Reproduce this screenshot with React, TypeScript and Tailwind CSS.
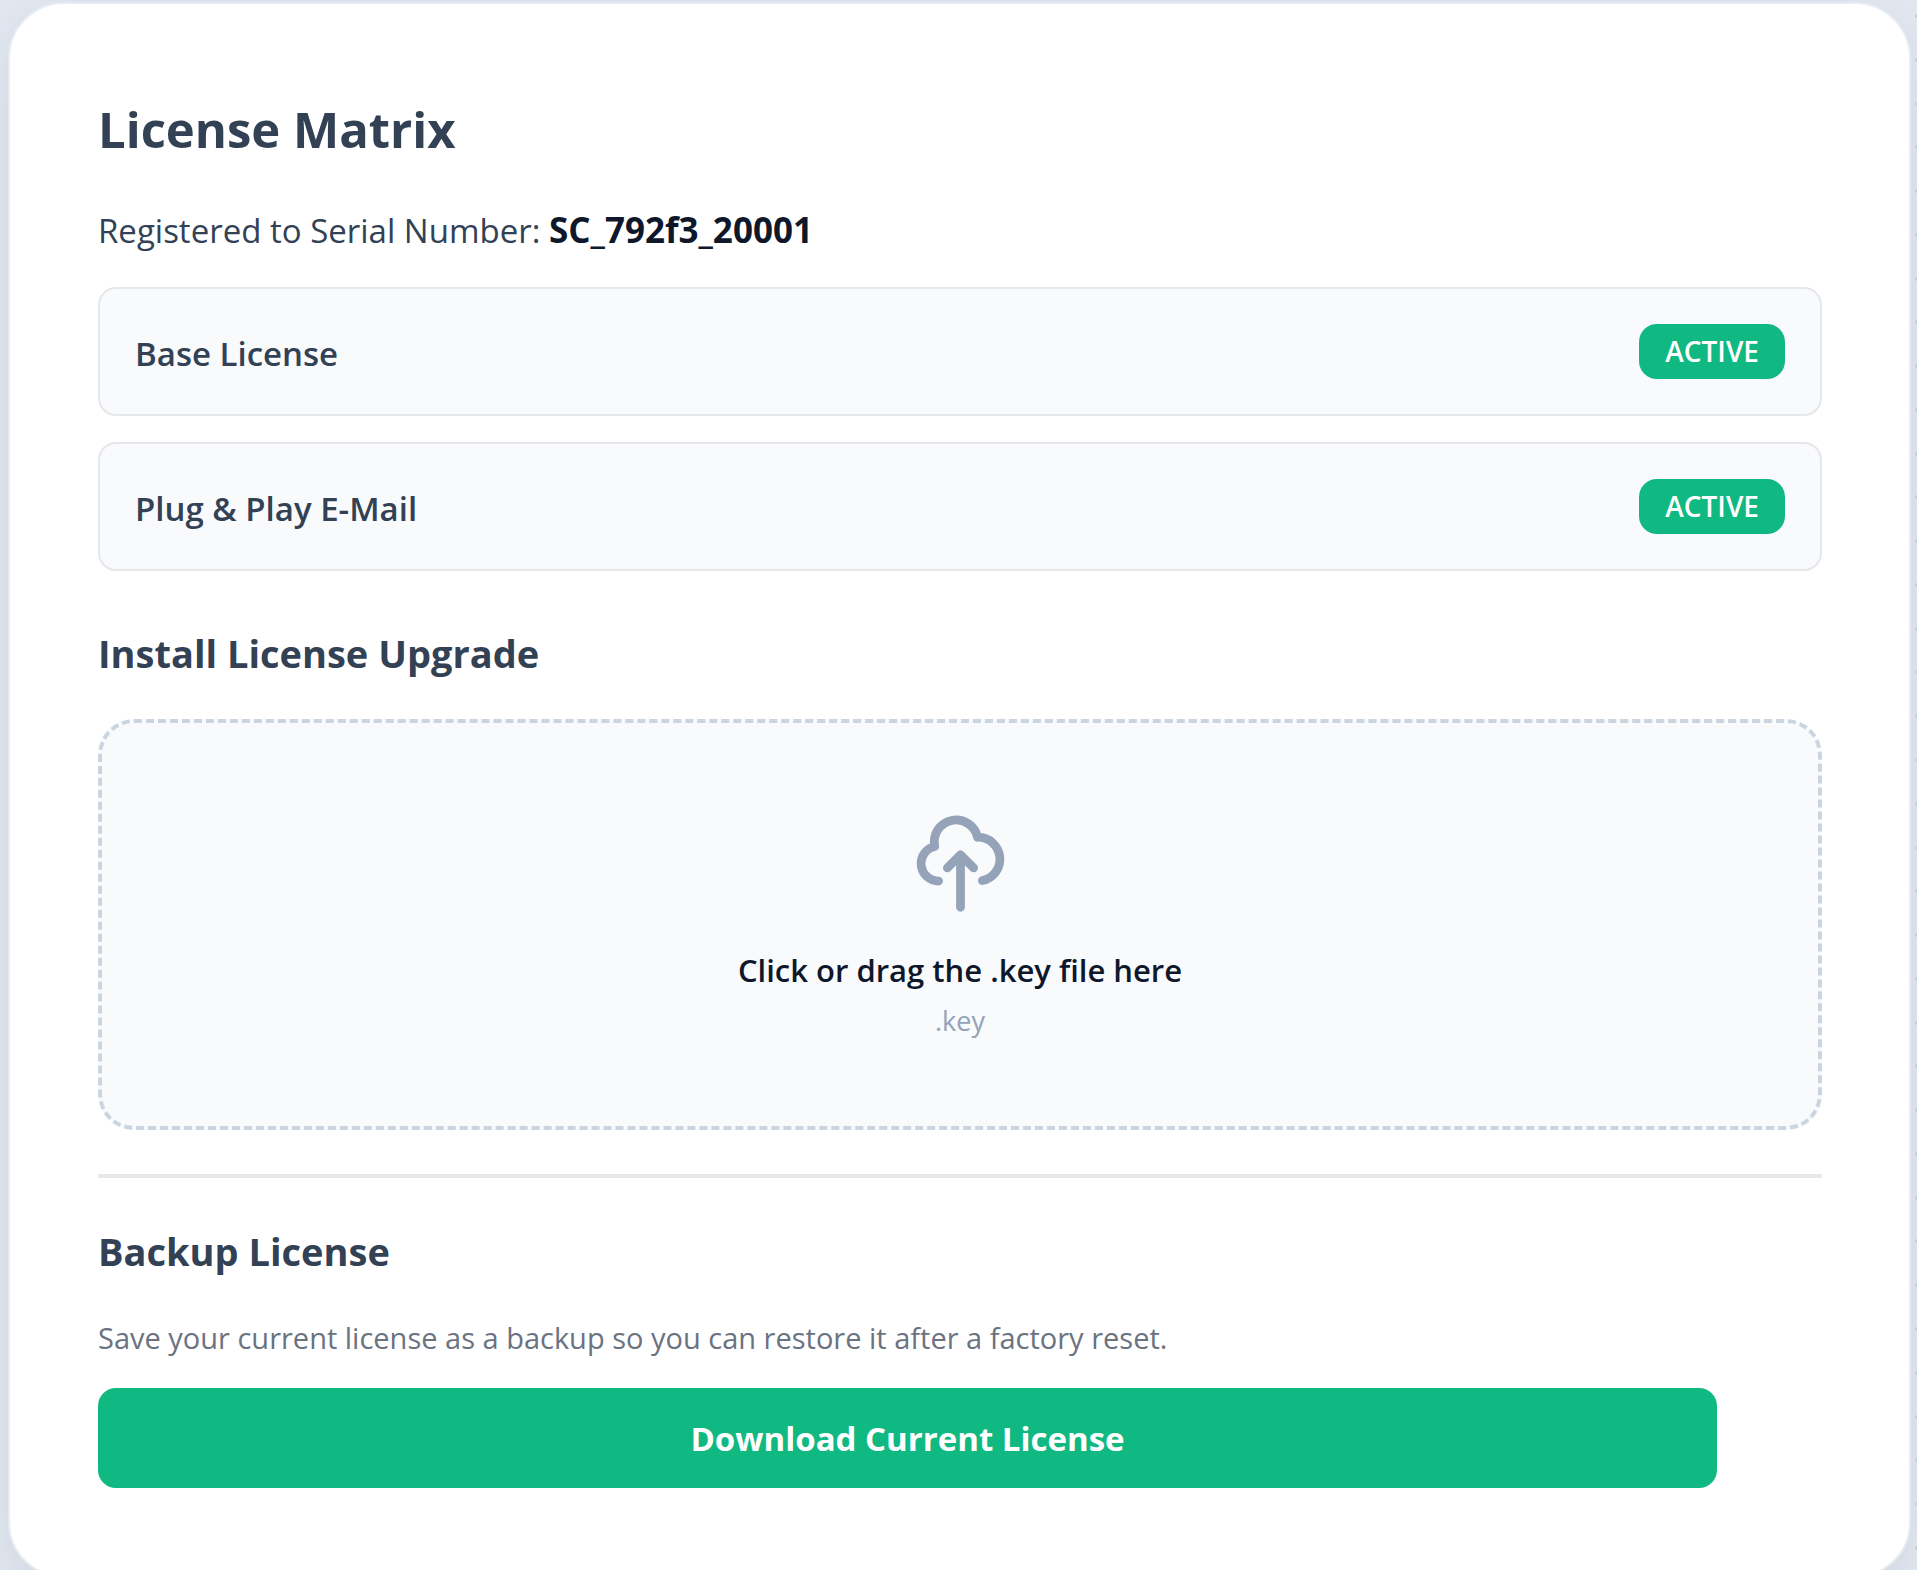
import React from "react";

const licenses = ["Base License", "Plug & Play E-Mail"];

export default function App() {
  return (
    <div className="flex h-screen items-start gap-1 overflow-hidden bg-[#e2e8f0] pt-0.5 pl-2 font-['Open_Sans','Noto_Sans',sans-serif] text-[#334155]">
      <main className="min-w-0 flex-1 rounded-[56px] border-2 border-[#e7ecf3] bg-white py-[88px] pr-[87px] pl-[88px] shadow-[0_16px_48px_rgba(100,116,139,0.14)]">
        <h1 className="text-[49px] leading-[74px] font-bold">License Matrix</h1>
        <p className="mt-8 text-[33px] leading-[64px]">
          Registered to Serial Number: <strong className="text-[35px] font-bold text-[#0f172a]">SC_792f3_20001</strong>
        </p>
        <ul className="mt-6 flex flex-col gap-[26px]">
          {licenses.map((name) => (
            <li key={name} className="flex items-center justify-between rounded-[18px] border-2 border-[#e5e7eb] bg-[#f8fafc] p-[35px]">
              <span className="pt-1 text-[33px] leading-[50px] font-semibold">{name}</span>
              <span className="rounded-[18px] bg-[#10b981] px-[26px] text-[28px] leading-[55px] font-semibold text-white">ACTIVE</span>
            </li>
          ))}
        </ul>
        <h2 className="mt-14 text-[38px] leading-[52px] font-bold">Install License Upgrade</h2>
        <label className="mt-10 flex cursor-pointer flex-col items-center rounded-[36px] border-4 border-dashed border-[#cbd5e1] bg-[#f8fafc] pt-[88px] pb-[84px]">
          <input type="file" accept=".key" className="sr-only" />
          <svg className="size-[105px] text-[#94a3b8]" viewBox="0 0 24 24" fill="none" stroke="currentColor" strokeWidth="2" strokeLinecap="round" strokeLinejoin="round" aria-hidden="true">
            <path d="M7 16a4 4 0 01-.88-7.903A5 5 0 1115.9 6L16 6a5 5 0 011 9.9M15 13l-3-3m0 0l-3 3m3-3v12" />
          </svg>
          <span className="mt-7 text-[31px] leading-[52px] font-semibold text-[#0f172a]">Click or drag the .key file here</span>
          <span className="mt-1 text-[27px] leading-[42px] text-[#94a3b8]">.key</span>
        </label>
        <hr className="mt-11 border-t-4 border-[#e5e7eb]" />
        <h2 className="mt-[47px] text-[38px] leading-[52px] font-bold">Backup License</h2>
        <p className="mt-[33px] text-[29px] leading-[56px] text-[#6b7280]">
          Save your current license as a backup so you can restore it after a factory reset.
        </p>
        <div className="mt-[22px] pr-[105px]">
          <button type="button" className="h-[100px] w-full rounded-[18px] bg-[#10b981] pt-0.5 text-[33px] font-bold text-white">
            Download Current License
          </button>
        </div>
      </main>
      <div className="flex h-full flex-col justify-between pt-3 pb-5" aria-hidden="true">
        {Array.from({ length: 36 }, (_, i) => (
          <span key={i} className="h-1 w-0.5 rounded-l-sm bg-[#c6ceda]" />
        ))}
      </div>
    </div>
  );
}
